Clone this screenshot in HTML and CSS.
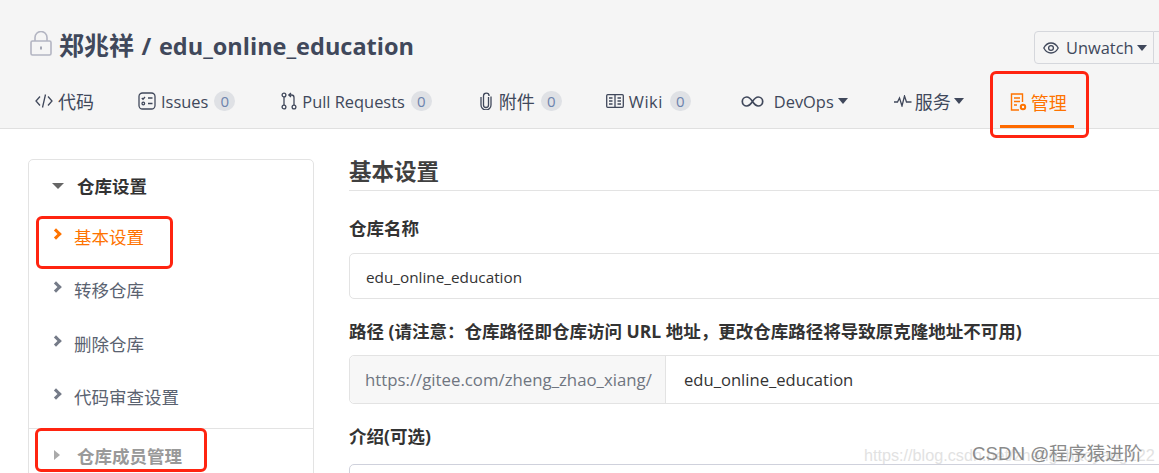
FILE: index.html
```html
<!DOCTYPE html>
<html lang="zh-CN">
<head>
<meta charset="utf-8">
<title>基本设置</title>
<link rel="stylesheet" href="styles.css">
</head>
<body>
<header class="repo-header">
  <div class="title-row">
    <h1 class="repo-title">
      <svg class="lock" width="22" height="25" viewBox="0 0 22 25" fill="none" stroke="#b3b5c2" stroke-width="1.6"><rect x="1" y="10" width="20" height="14" rx="1.5"/><path d="M5 10V6.500a6 6 0 0 1 12 0V10"/><path d="M11 15.500v3" stroke="#9a9dac" stroke-width="1.8"/></svg>
      <span><span class="title-cjk">郑兆祥</span> / edu_online_education</span>
    </h1>
    <div class="watch">
      <button class="watch-btn">
        <svg width="16" height="12" viewBox="0 0 16 12" fill="none" stroke="#40485b" stroke-width="1.3"><path d="M.8 6C2.5 2.8 5 1 8 1s5.500 1.800 7.200 5C13.500 9.200 11 11 8 11S2.500 9.200.8 6z"/><circle cx="8" cy="6" r="2.400"/></svg>
        <span>Unwatch</span><i class="caret"></i>
      </button>
      <div class="watch-count"></div>
    </div>
  </div>
  <nav class="tabs">
    <a class="tab">
      <svg width="18" height="16" viewBox="0 0 18 16" fill="none" stroke="#40485b" stroke-width="1.3"><path d="M5 3.500 1 8l4 4.500M13 3.500 17 8l-4 4.500M10.500 1.500l-3 13"/></svg>
      <span class="cjk">代码</span>
    </a>
    <a class="tab">
      <svg width="18" height="18" viewBox="0 0 18 18" fill="none" stroke="#40485b" stroke-width="1.300"><rect x="1" y="1" width="16" height="16" rx="3.500"/><path d="M3.800 6l1.200 1.200L7 5M10 6h4.500M10 11.500h4.500"/><circle cx="5.300" cy="11.500" r="1.300"/></svg>
      <span>Issues</span><b class="badge">0</b>
    </a>
    <a class="tab tab-pr">
      <svg width="16" height="18" viewBox="0 0 16 18" fill="none" stroke="#40485b" stroke-width="1.300"><circle cx="3" cy="3" r="1.900"/><circle cx="3" cy="15" r="1.900"/><circle cx="13" cy="15" r="1.900"/><path d="M3 5v8M13 13V5.500C13 3.800 12 3 10.500 3H8M10 1 7.800 3 10 5"/></svg>
      <span>Pull Requests</span><b class="badge">0</b>
    </a>
    <a class="tab tab-attach">
      <svg width="12" height="18" viewBox="0 0 12 18" fill="none" stroke="#40485b" stroke-width="1.300"><path d="M8.500 5v8a2.500 2.500 0 0 1-5 0V4a2.800 2.800 0 0 1 5.600 0"/><path d="M11 4.500V13a5 5 0 0 1-10 0V5"/></svg>
      <span class="cjk wide-text">附件</span><b class="badge">0</b>
    </a>
    <a class="tab">
      <svg width="18" height="14" viewBox="0 0 18 14" fill="none" stroke="#40485b" stroke-width="1.300"><rect x=".7" y=".7" width="16.600" height="12.600" rx="1"/><path d="M9 1v12M3 4h3.500M3 7h3.500M3 10h3.500M11.500 4H15M11.500 7H15M11.500 10H15"/></svg>
      <span class="wiki-text">Wiki</span><b class="badge">0</b>
    </a>
    <a class="tab tab-devops">
      <svg class="devops-icon" width="23" height="11" viewBox="0 0 23 11" fill="none" stroke="#40485b" stroke-width="1.700"><path d="M11.500 5.500C9.500 2.500 8 1 5.800 1a4.500 4.500 0 0 0 0 9c2.200 0 3.700-1.500 5.700-4.500s3.500-4.500 5.700-4.500a4.500 4.500 0 0 1 0 9c-2.200 0-3.700-1.500-5.700-4.500z"/></svg>
      <span>DevOps</span><i class="caret caret-devops"></i>
    </a>
    <a class="tab tab-service">
      <svg width="18" height="12" viewBox="0 0 18 12" fill="none" stroke="#40485b" stroke-width="1.300"><path d="M0 7h3.500l2-4 2.500 8 2.500-10 2 6h5"/></svg>
      <span class="cjk service-text">服务</span><i class="caret"></i>
    </a>
    <a class="tab tab-active">
      <svg width="17" height="18" viewBox="0 0 17 18" fill="none" stroke="#fe7300" stroke-width="1.400"><path d="M9 17H1.500V1h11v8"/><path d="M4 5h6M4 8.500h6M4 12h3"/><circle cx="13" cy="14" r="2.200" stroke-width="2"/></svg>
      <span class="cjk">管理</span>
    </a>
  </nav>
</header>

<div class="page">
  <aside class="side">
    <section class="side-group">
      <h3 class="side-head"><i class="tri-down"></i>仓库设置</h3>
      <a class="side-item side-item-active"><i class="chev"></i>基本设置</a>
      <a class="side-item"><i class="chev"></i>转移仓库</a>
      <a class="side-item"><i class="chev"></i>删除仓库</a>
      <a class="side-item"><i class="chev"></i>代码审查设置</a>
    </section>
    <section class="side-group side-group-muted">
      <h3 class="side-head side-head-muted"><i class="tri-right"></i>仓库成员管理</h3>
    </section>
  </aside>
  <main class="content">
    <h2 class="section-title">基本设置</h2>
    <label class="field-label">仓库名称</label>
    <div class="input">edu_online_education</div>
    <label class="field-label field-label-path">路径 (请注意：仓库路径即仓库访问 URL 地址，更改仓库路径将导致原克隆地址不可用)</label>
    <div class="input-group">
      <span class="addon">https://gitee.com/zheng_zhao_xiang/</span>
      <span class="addon-input">edu_online_education</span>
    </div>
    <label class="field-label field-label-intro">介绍(可选)</label>
    <div class="textarea"></div>
  </main>
</div>

<div class="mark mark-tab"></div>
<div class="mark mark-basic"></div>
<div class="mark mark-member"></div>
<div class="wm-url">https://blog.csdn.net/zhengzhaoyang122</div>
<div class="wm-csdn">CSDN @程序猿进阶</div>
</body>
</html>
```
FILE: styles.css
```css
* { box-sizing: border-box; }
html, body { margin: 0; height: 473px; overflow: hidden; background: #fff; }
body {
  position: relative;
  font-family: "Open Sans", "Noto Sans CJK SC", sans-serif;
  font-size: 17.5px;
  color: #40485b;
}
.repo-header {
  height: 129px;
  background: #f5f5f5;
  border-bottom: 1px solid #e0e0e0;
  padding: 31px 0 0 30px;
}
.title-row { display: flex; justify-content: space-between; align-items: flex-start; height: 50px; }
.repo-title {
  display: flex;
  align-items: flex-start;
  gap: 7px;
  margin: 0;
  font-size: 23.5px;
  line-height: 28px;
  font-weight: 700;
  word-spacing: 1.5px;
  color: #40485b;
}
.title-cjk { font-size: 25px; }
.lock { flex: none; }
.watch { display: flex; height: 33px; }
.watch-btn {
  display: flex;
  align-items: center;
  gap: 7px;
  width: 120px;
  height: 33px;
  padding: 0 0 0 8px;
  border: 1px solid #d5d7dc;
  border-radius: 4px 0 0 4px;
  background: #f5f5f5;
  font: inherit;
  font-size: 16.4px;
  color: #40485b;
}
.watch-btn .caret { margin-left: -4px; }
.watch-count { width: 5px; border: solid #d5d7dc; border-width: 1px 0; }
.caret {
  display: inline-block;
  width: 0;
  height: 0;
  border: 5px solid transparent;
  border-top: 6px solid #40485b;
  border-bottom: 0;
}
.tabs { display: flex; align-items: flex-start; height: 47px; padding-left: 5px; gap: 44px; margin-top: -2px; }
.tab {
  display: flex;
  align-items: center;
  gap: 5px;
  height: 46px;
  padding-bottom: 2px;
  white-space: nowrap;
  font-size: 16.4px;
  color: #40485b;
}
.cjk { font-size: 18px; }
.tab-pr { margin-left: 2px; }
.tab-attach { margin-left: 4px; }
.wide-text { margin-left: 2px; }
.wiki-text { letter-spacing: .5px; margin-right: 1px; }
.tab-devops { margin-left: 6px; }
.devops-icon { margin-right: 5px; }
.tab .caret { margin-left: -2px; }
.tab .caret-devops { margin-left: -1px; }
.tab-service { margin-left: 2px; }
.service-text { margin-left: -2px; }
.badge {
  display: inline-flex;
  align-items: center;
  justify-content: center;
  width: 21px;
  height: 20px;
  margin-left: 1px;
  border-radius: 10px;
  background: #dfe1e5;
  font-size: 15px;
  font-weight: 400;
  color: #6d84ad;
}
.tab-active {
  color: #fe7300;
  gap: 4px;
  padding: 0 7px 0 10px;
  margin-left: -8px;
  height: 49px;
  border-bottom: 3px solid #fe6a00;
}
.page { display: flex; height: 344px; overflow: hidden; padding: 30px 0 0 28px; gap: 35px; }
.side {
  flex: none;
  width: 286px;
  height: 400px;
  border: 1px solid #e3e3e3;
  border-radius: 5px;
}
.side-group { height: 268px; padding-top: 8px; }
.side-group-muted { height: auto; border-top: 1px solid #e3e3e3; padding-top: 9px; }
.side-head {
  display: flex;
  align-items: center;
  height: 34px;
  margin: 0 0 8px;
  padding-left: 48px;
  position: relative;
  font-size: 17.500px;
  font-weight: 700;
  color: #333;
}
.side-head-muted { color: #999; }
.tri-down, .tri-right { position: absolute; width: 0; height: 0; border-style: solid; border-color: transparent; }
.tri-down { left: 23px; top: 15px; border-width: 6px 6px 0; border-top-color: #666; }
.tri-right { left: 25px; top: 12px; border-width: 5px 0 5px 6px; border-left-color: #aaa; }
.side-item {
  display: flex;
  align-items: center;
  height: 53.300px;
  padding-left: 45px;
  position: relative;
  font-size: 17.500px;
  color: #5a6270;
}
.side-item-active { color: #fe7300; }
.chev {
  position: absolute;
  left: 23px;
  top: 20px;
  width: 8px;
  height: 8px;
  border: solid #757b88;
  border-width: 3px 3px 0 0;
  transform: rotate(45deg);
}
.side-item-active .chev { border-color: #fe7300; }
.content { flex: 1; min-width: 0; margin-right: -12px; }
.section-title {
  margin: 0;
  height: 32px;
  font-size: 22.500px;
  line-height: 26px;
  font-weight: 700;
  color: #404040;
  border-bottom: 1px solid #e3e3e3;
}
.field-label {
  display: block;
  margin-top: 23px;
  height: 39px;
  line-height: 28px;
  font-size: 17.500px;
  font-weight: 700;
  color: #333;
  white-space: nowrap;
}
.field-label-path { margin-top: 18px; height: 22px; }
.field-label-intro { margin-top: 18px; height: 42px; }
.input {
  height: 46px;
  padding: 1px 0 0 16px;
  border: 1px solid #e3e3e3;
  border-radius: 5px;
  display: flex;
  align-items: center;
  font-size: 15.300px;
  color: #333;
}
.input-group {
  display: flex;
  height: 49px;
  margin-top: 16px;
  border: 1px solid #e3e3e3;
  border-radius: 5px;
}
.addon {
  display: flex;
  align-items: center;
  flex: none;
  width: 316px;
  padding-left: 15px;
  background: #f7f7f7;
  border-right: 1px solid #e3e3e3;
  border-radius: 5px 0 0 5px;
  font-size: 16.800px;
  color: #6f7580;
  white-space: nowrap;
}
.addon-input { display: flex; align-items: center; padding-left: 18px; font-size: 16.600px; color: #333; }
.textarea { height: 60px; border: 1px solid #cfd1dc; border-radius: 5px; }
.mark { position: absolute; border: 3.500px solid #ff2410; border-radius: 6px; }
.mark-tab { left: 990px; top: 71px; width: 99px; height: 67px; }
.mark-basic { left: 36px; top: 216px; width: 137px; height: 53px; }
.mark-member { left: 35px; top: 428px; width: 172px; height: 44px; }
.wm-url {
  position: absolute;
  left: 864px;
  top: 444px;
  font-family: "Liberation Sans", sans-serif;
  font-size: 16.200px;
  line-height: 22px;
  color: #e2e2e2;
  white-space: nowrap;
}
.wm-csdn {
  position: absolute;
  left: 972px;
  top: 442px;
  font-family: "Liberation Sans", "Noto Sans CJK SC", sans-serif;
  font-size: 18.700px;
  line-height: 24px;
  color: #8a8a8a;
  white-space: nowrap;
}
```
